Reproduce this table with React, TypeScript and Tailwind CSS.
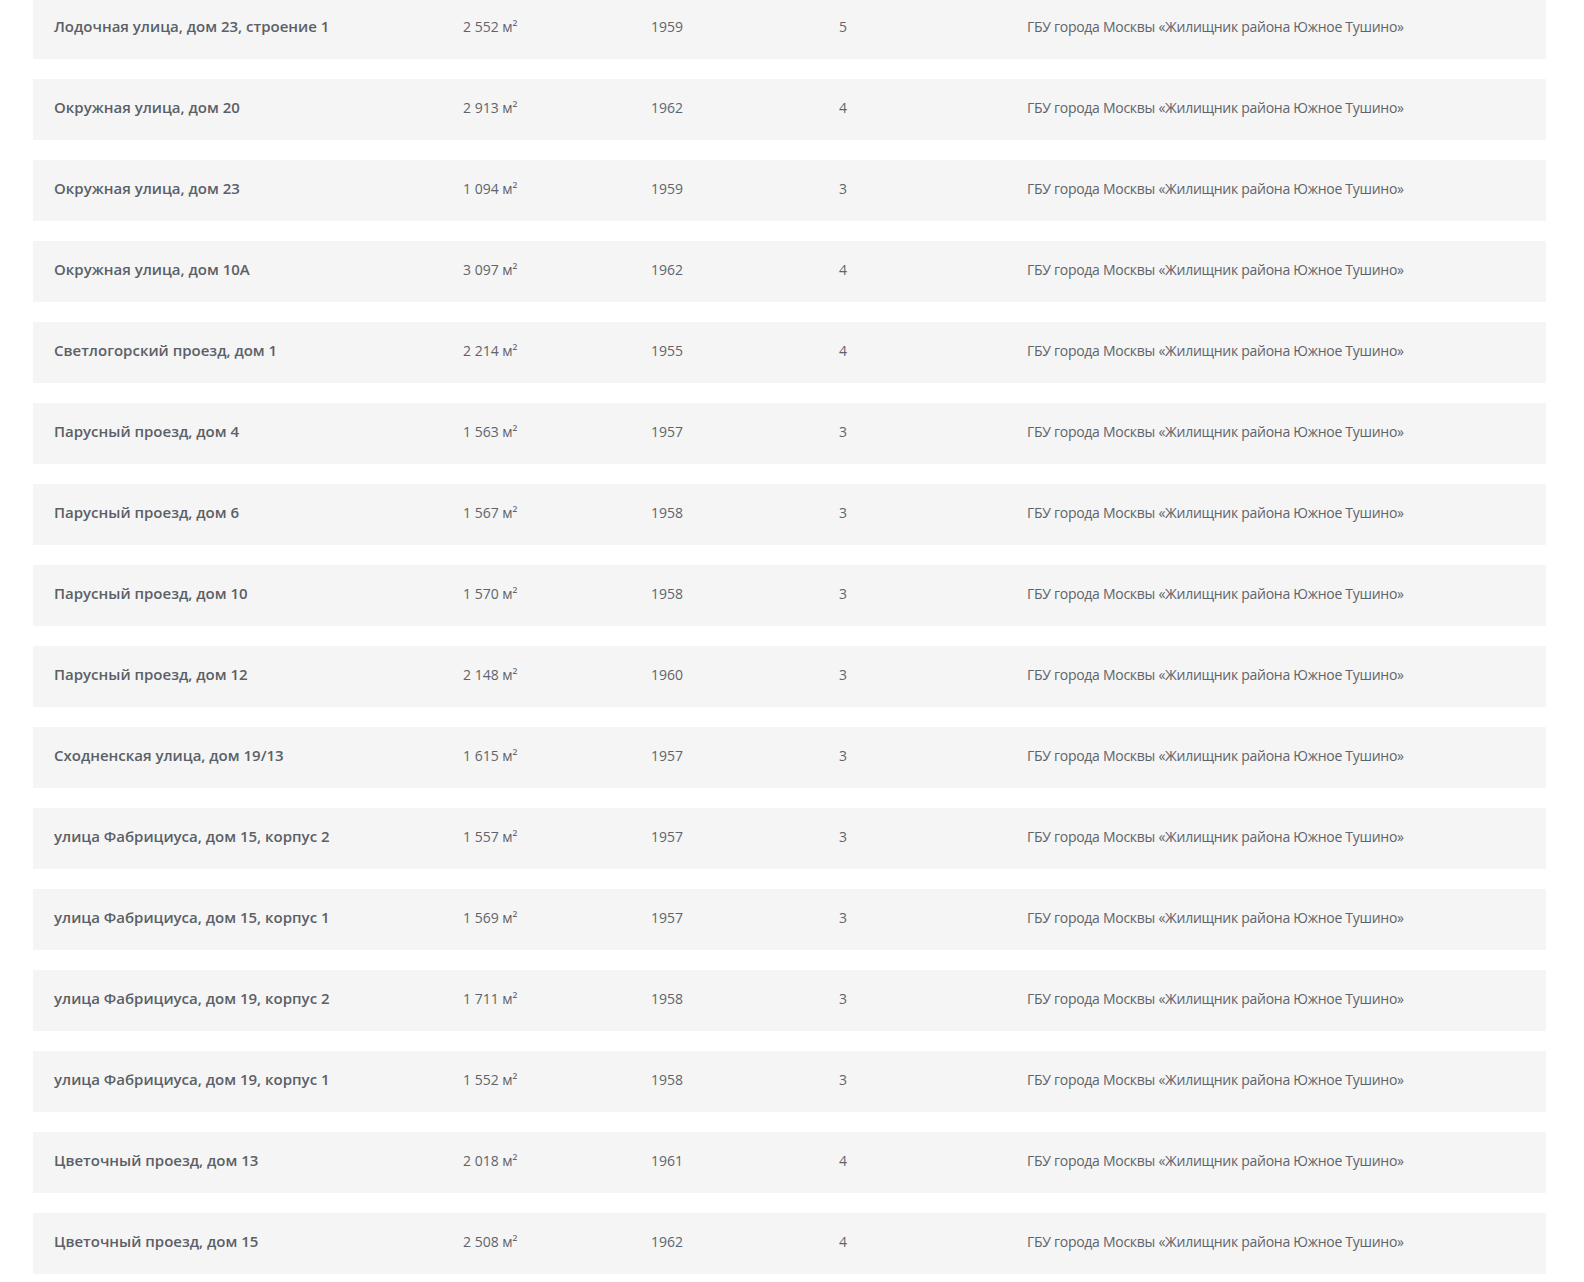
import React from "react";

const rows: [string, string, string, string][] = [
  ["Лодочная улица, дом 23, строение 1", "2 552 м²", "1959", "5"],
  ["Окружная улица, дом 20", "2 913 м²", "1962", "4"],
  ["Окружная улица, дом 23", "1 094 м²", "1959", "3"],
  ["Окружная улица, дом 10А", "3 097 м²", "1962", "4"],
  ["Светлогорский проезд, дом 1", "2 214 м²", "1955", "4"],
  ["Парусный проезд, дом 4", "1 563 м²", "1957", "3"],
  ["Парусный проезд, дом 6", "1 567 м²", "1958", "3"],
  ["Парусный проезд, дом 10", "1 570 м²", "1958", "3"],
  ["Парусный проезд, дом 12", "2 148 м²", "1960", "3"],
  ["Сходненская улица, дом 19/13", "1 615 м²", "1957", "3"],
  ["улица Фабрициуса, дом 15, корпус 2", "1 557 м²", "1957", "3"],
  ["улица Фабрициуса, дом 15, корпус 1", "1 569 м²", "1957", "3"],
  ["улица Фабрициуса, дом 19, корпус 2", "1 711 м²", "1958", "3"],
  ["улица Фабрициуса, дом 19, корпус 1", "1 552 м²", "1958", "3"],
  ["Цветочный проезд, дом 13", "2 018 м²", "1961", "4"],
  ["Цветочный проезд, дом 15", "2 508 м²", "1962", "4"],
];

const org = "ГБУ города Москвы «Жилищник района Южное Тушино»";

export default function App() {
  return (
    <div
      className="w-[1584px] h-[1282px] overflow-hidden bg-white text-[#5f646b]"
      style={{ fontFamily: '"Open Sans", "Noto Sans", sans-serif' }}
    >
      <div className="ml-[33px] w-[1513px] mt-[-2px] flex flex-col gap-[20px]">
        {rows.map((r, i) => (
          <div
            key={i}
            className="h-[61px] bg-[#f5f5f5] flex items-center pl-[20px] pb-[3px] text-[14px] leading-[20px]"
          >
            <div className="w-[409px] ml-[1px] pb-[2px] shrink-0 font-semibold text-[15px] leading-[20px] text-[#5b6067]">
              {r[0]}
            </div>
            <div className="w-[188px] shrink-0">{r[1]}</div>
            <div className="w-[188px] shrink-0">{r[2]}</div>
            <div className="w-[188px] shrink-0">{r[3]}</div>
            <div className="flex-1 tracking-[-0.28px]">{org}</div>
          </div>
        ))}
      </div>
    </div>
  );
}
